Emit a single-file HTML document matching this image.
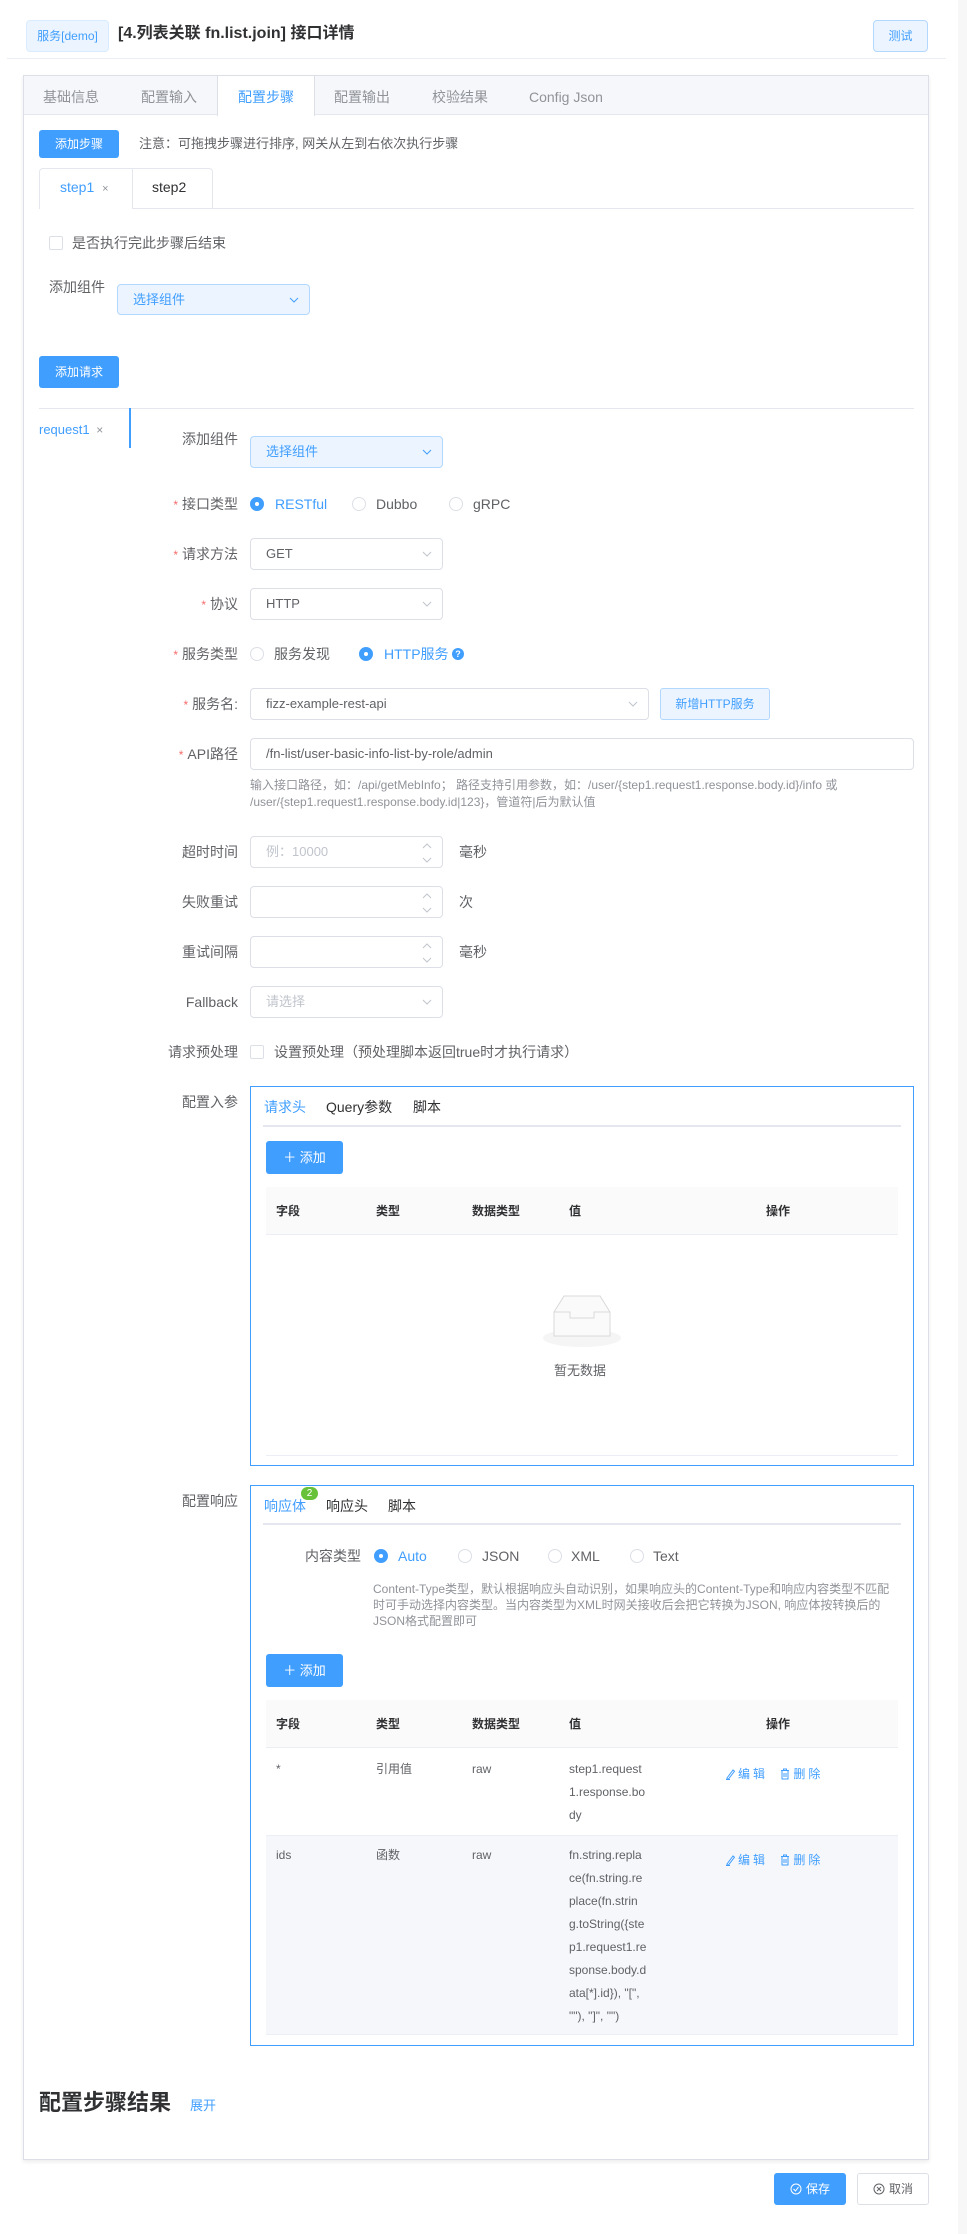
<!DOCTYPE html>
<html><head><meta charset="utf-8">
<style>
*{box-sizing:border-box;margin:0;padding:0}
body{width:967px;height:2234px;background:#fff;font-family:"Liberation Sans","Noto Sans CJK SC",sans-serif;color:#606266;position:relative;overflow:hidden}
.a{position:absolute}
.lbl{position:absolute;right:729px;height:20px;line-height:20px;font-size:14px;color:#606266;white-space:nowrap}
.lbl i{color:#f56c6c;font-style:normal;margin-right:4px;font-size:12px}
.inp{position:absolute;border:1px solid #dcdfe6;border-radius:4px;background:#fff;font-size:13px;color:#606266;padding-left:15px;white-space:nowrap}
.sel{background:#ecf5ff;border-color:#b3d8ff;color:#409eff}
.ph{color:#c0c4cc}
.arr{position:absolute;right:10px;top:50%;margin-top:-4px}
.btn{position:absolute;background:#409eff;color:#fff;border-radius:3px;font-size:12px;text-align:center}
.radio{position:absolute;width:14px;height:14px;border-radius:50%;border:1px solid #dcdfe6;background:#fff}
.radio.on{background:#409eff;border-color:#409eff}
.radio.on:after{content:"";position:absolute;left:4px;top:4px;width:4px;height:4px;border-radius:50%;background:#fff}
.t{position:absolute;white-space:nowrap;line-height:20px;height:20px}
.cb{position:absolute;width:14px;height:14px;border:1px solid #dcdfe6;border-radius:2px;background:#fff}
.th{position:absolute;font-size:12px;font-weight:bold;color:#303133;line-height:20px}
.td{position:absolute;font-size:12px;color:#606266;line-height:23px;white-space:nowrap}
.lk{position:absolute;font-size:12px;color:#409eff;line-height:20px;white-space:nowrap;letter-spacing:3px}
.lk svg{vertical-align:-2px;margin-right:3px}
</style></head><body>

<div class="a" style="left:26px;top:20px;width:83px;height:32px;background:#ecf5ff;border:1px solid #d9ecff;border-radius:4px;color:#409eff;font-size:12px;line-height:30px;text-align:center">服务[demo]</div>
<div class="t" style="left:118px;top:24px;font-size:16px;font-weight:bold;color:#303133">[4.列表关联 fn.list.join] 接口详情</div>
<div class="a" style="left:873px;top:20px;width:55px;height:32px;background:#ecf5ff;border:1px solid #b3d8ff;border-radius:4px;color:#409eff;font-size:12px;line-height:30px;text-align:center">测试</div>
<div class="a" style="left:7px;top:58px;width:939px;height:1px;background:#ebeef5"></div>
<div class="a" style="left:958px;top:0;width:9px;height:2234px;background:#f7f7f7"></div>

<div class="a" style="left:23px;top:75px;width:906px;height:2085px;border:1px solid #dcdfe6;box-shadow:0 2px 4px rgba(0,0,0,.08);background:#fff"></div>
<div class="a" style="left:24px;top:76px;width:904px;height:39px;background:#f5f7fa;border-bottom:1px solid #e4e7ed"></div>
<div class="a" style="left:217px;top:76px;width:98px;height:40px;background:#fff;border-left:1px solid #dcdfe6;border-right:1px solid #dcdfe6"></div>
<div class="t" style="left:43px;top:87px;font-size:14px;color:#909399">基础信息</div>
<div class="t" style="left:141px;top:87px;font-size:14px;color:#909399">配置输入</div>
<div class="t" style="left:238px;top:87px;font-size:14px;color:#409eff">配置步骤</div>
<div class="t" style="left:334px;top:87px;font-size:14px;color:#909399">配置输出</div>
<div class="t" style="left:432px;top:87px;font-size:14px;color:#909399">校验结果</div>
<div class="t" style="left:529px;top:87px;font-size:14px;color:#909399">Config Json</div>

<div class="btn" style="left:39px;top:130px;width:80px;height:28px;line-height:28px">添加步骤</div>
<div class="t" style="left:139px;top:134px;font-size:13px;color:#606266">注意：可拖拽步骤进行排序, 网关从左到右依次执行步骤</div>

<div class="a" style="left:39px;top:168px;width:174px;height:41px;border:1px solid #e4e7ed;border-bottom:none;border-radius:4px 4px 0 0"></div>
<div class="a" style="left:132px;top:168px;width:1px;height:40px;background:#e4e7ed"></div>
<div class="a" style="left:132px;top:208px;width:782px;height:1px;background:#e4e7ed"></div>
<div class="t" style="left:60px;top:177px;font-size:14px;color:#409eff">step1 <span style="font-size:11px;color:#909399;margin-left:4px">×</span></div>
<div class="t" style="left:152px;top:177px;font-size:14px;color:#303133">step2</div>

<div class="cb" style="left:49px;top:236px"></div>
<div class="t" style="left:72px;top:233px;font-size:14px">是否执行完此步骤后结束</div>

<div class="t" style="left:49px;top:277px;font-size:14px">添加组件</div>
<div class="inp sel" style="left:117px;top:284px;width:193px;height:31px;line-height:29px">选择组件<svg class="arr" width="10" height="8"><path d="M1 2l4 4 4-4" fill="none" stroke="#409eff"/></svg></div>

<div class="btn" style="left:39px;top:356px;width:80px;height:32px;line-height:32px">添加请求</div>
<div class="a" style="left:39px;top:408px;width:875px;height:1px;background:#e4e7ed"></div>
<div class="t" style="left:39px;top:420px;font-size:13px;color:#409eff">request1 <span style="color:#909399;font-size:12px;margin-left:3px">×</span></div>
<div class="a" style="left:129px;top:408px;width:2px;height:40px;background:#409eff"></div>

<div class="lbl" style="top:429px">添加组件</div>
<div class="inp sel" style="left:250px;top:436px;width:193px;height:32px;line-height:30px">选择组件<svg class="arr" width="10" height="8"><path d="M1 2l4 4 4-4" fill="none" stroke="#409eff"/></svg></div>

<div class="lbl" style="top:494px"><i>*</i>接口类型</div>
<div class="radio on" style="left:250px;top:497px"></div><div class="t" style="left:275px;top:494px;font-size:14px;color:#409eff">RESTful</div>
<div class="radio" style="left:352px;top:497px"></div><div class="t" style="left:376px;top:494px;font-size:14px;color:#606266">Dubbo</div>
<div class="radio" style="left:449px;top:497px"></div><div class="t" style="left:473px;top:494px;font-size:14px;color:#606266">gRPC</div>

<div class="lbl" style="top:544px"><i>*</i>请求方法</div>
<div class="inp" style="left:250px;top:538px;width:193px;height:32px;line-height:30px">GET<svg class="arr" width="10" height="8"><path d="M1 2l4 4 4-4" fill="none" stroke="#c0c4cc"/></svg></div>
<div class="lbl" style="top:594px"><i>*</i>协议</div>
<div class="inp" style="left:250px;top:588px;width:193px;height:32px;line-height:30px">HTTP<svg class="arr" width="10" height="8"><path d="M1 2l4 4 4-4" fill="none" stroke="#c0c4cc"/></svg></div>

<div class="lbl" style="top:644px"><i>*</i>服务类型</div>
<div class="radio" style="left:250px;top:647px"></div><div class="t" style="left:274px;top:644px;font-size:14px">服务发现</div>
<div class="radio on" style="left:359px;top:647px"></div><div class="t" style="left:384px;top:644px;font-size:14px;color:#409eff">HTTP服务</div>
<div class="a" style="left:452px;top:648px;width:12px;height:12px;border-radius:50%;background:#409eff;color:#fff;font-size:9px;line-height:12px;text-align:center;font-weight:bold">?</div>

<div class="lbl" style="top:694px"><i>*</i>服务名:</div>
<div class="inp" style="left:250px;top:688px;width:399px;height:32px;line-height:30px">fizz-example-rest-api<svg class="arr" width="10" height="8"><path d="M1 2l4 4 4-4" fill="none" stroke="#c0c4cc"/></svg></div>
<div class="a" style="left:660px;top:688px;width:110px;height:32px;background:#ecf5ff;border:1px solid #b3d8ff;border-radius:3px;color:#409eff;font-size:12px;line-height:30px;text-align:center">新增HTTP服务</div>

<div class="lbl" style="top:744px"><i>*</i>API路径</div>
<div class="inp" style="left:250px;top:738px;width:664px;height:32px;line-height:30px">/fn-list/user-basic-info-list-by-role/admin</div>
<div class="a" style="left:250px;top:777px;font-size:12px;color:#909399;line-height:17px;width:660px">输入接口路径，如：/api/getMebInfo；  路径支持引用参数，如：/user/{step1.request1.response.body.id}/info 或<br>/user/{step1.request1.response.body.id|123}，管道符|后为默认值</div>

<div class="lbl" style="top:842px">超时时间</div>
<div class="inp ph" style="left:250px;top:836px;width:193px;height:32px;line-height:30px">例：10000<svg class="a" style="right:10px;top:6px" width="10" height="20"><path d="M1 5l4-4 4 4M1 15l4 4 4-4" fill="none" stroke="#c0c4cc"/></svg></div>
<div class="t" style="left:459px;top:842px;font-size:14px">毫秒</div>
<div class="lbl" style="top:892px">失败重试</div>
<div class="inp" style="left:250px;top:886px;width:193px;height:32px"><svg class="a" style="right:10px;top:6px" width="10" height="20"><path d="M1 5l4-4 4 4M1 15l4 4 4-4" fill="none" stroke="#c0c4cc"/></svg></div>
<div class="t" style="left:459px;top:892px;font-size:14px">次</div>
<div class="lbl" style="top:942px">重试间隔</div>
<div class="inp" style="left:250px;top:936px;width:193px;height:32px"><svg class="a" style="right:10px;top:6px" width="10" height="20"><path d="M1 5l4-4 4 4M1 15l4 4 4-4" fill="none" stroke="#c0c4cc"/></svg></div>
<div class="t" style="left:459px;top:942px;font-size:14px">毫秒</div>
<div class="lbl" style="top:992px">Fallback</div>
<div class="inp ph" style="left:250px;top:986px;width:193px;height:32px;line-height:30px">请选择<svg class="arr" width="10" height="8"><path d="M1 2l4 4 4-4" fill="none" stroke="#c0c4cc"/></svg></div>

<div class="lbl" style="top:1042px">请求预处理</div>
<div class="cb" style="left:250px;top:1045px"></div>
<div class="t" style="left:274px;top:1042px;font-size:14px">设置预处理（预处理脚本返回true时才执行请求）</div>

<div class="lbl" style="top:1092px">配置入参</div>
<div class="a" style="left:250px;top:1086px;width:664px;height:380px;border:1px solid #409eff"></div>
<div class="t" style="left:264px;top:1097px;font-size:14px;color:#409eff">请求头</div>
<div class="t" style="left:326px;top:1097px;font-size:14px;color:#303133">Query参数</div>
<div class="t" style="left:413px;top:1097px;font-size:14px;color:#303133">脚本</div>
<div class="a" style="left:263px;top:1125px;width:638px;height:2px;background:#e4e7ed"></div>
<div class="btn" style="left:266px;top:1141px;width:77px;height:33px;line-height:33px;font-size:13px">＋ 添加</div>
<div class="a" style="left:266px;top:1187px;width:632px;height:48px;background:#fafafa;border-bottom:1px solid #ebeef5"></div>
<div class="th" style="left:276px;top:1201px">字段</div><div class="th" style="left:376px;top:1201px">类型</div><div class="th" style="left:472px;top:1201px">数据类型</div><div class="th" style="left:569px;top:1201px">值</div><div class="th" style="left:766px;top:1201px">操作</div>
<svg class="a" style="left:542px;top:1294px" width="80" height="54"><ellipse cx="40" cy="44" rx="39" ry="9" fill="#f5f5f5"/><path d="M12 18L22 2h36l10 16v24H12z" fill="#fafafa" stroke="#d9d9d9"/><path d="M12 18h16v6h24v-6h16" fill="none" stroke="#d9d9d9"/></svg>
<div class="t" style="left:554px;top:1361px;font-size:13px;color:#606266">暂无数据</div>
<div class="a" style="left:266px;top:1455px;width:632px;height:1px;background:#ebeef5"></div>

<div class="lbl" style="top:1491px">配置响应</div>
<div class="a" style="left:250px;top:1485px;width:664px;height:561px;border:1px solid #409eff"></div>
<div class="t" style="left:264px;top:1496px;font-size:14px;color:#409eff">响应体</div>
<div class="a" style="left:301px;top:1487px;width:17px;height:13px;border-radius:7px;background:#67c23a;color:#fff;font-size:10px;line-height:13px;text-align:center">2</div>
<div class="t" style="left:326px;top:1496px;font-size:14px;color:#303133">响应头</div>
<div class="t" style="left:388px;top:1496px;font-size:14px;color:#303133">脚本</div>
<div class="a" style="left:263px;top:1523px;width:638px;height:2px;background:#e4e7ed"></div>
<div class="t" style="left:305px;top:1546px;font-size:14px">内容类型</div>
<div class="radio on" style="left:374px;top:1549px"></div><div class="t" style="left:398px;top:1546px;font-size:14px;color:#409eff">Auto</div>
<div class="radio" style="left:458px;top:1549px"></div><div class="t" style="left:482px;top:1546px;font-size:14px">JSON</div>
<div class="radio" style="left:548px;top:1549px"></div><div class="t" style="left:571px;top:1546px;font-size:14px">XML</div>
<div class="radio" style="left:630px;top:1549px"></div><div class="t" style="left:653px;top:1546px;font-size:14px">Text</div>
<div class="a" style="left:373px;top:1581px;font-size:12px;color:#909399;line-height:16px;white-space:nowrap">Content-Type类型，默认根据响应头自动识别，如果响应头的Content-Type和响应内容类型不匹配<br>时可手动选择内容类型。当内容类型为XML时网关接收后会把它转换为JSON, 响应体按转换后的<br>JSON格式配置即可</div>
<div class="btn" style="left:266px;top:1654px;width:77px;height:33px;line-height:33px;font-size:13px">＋ 添加</div>
<div class="a" style="left:266px;top:1700px;width:632px;height:48px;background:#fafafa;border-bottom:1px solid #ebeef5"></div>
<div class="th" style="left:276px;top:1714px">字段</div><div class="th" style="left:376px;top:1714px">类型</div><div class="th" style="left:472px;top:1714px">数据类型</div><div class="th" style="left:569px;top:1714px">值</div><div class="th" style="left:766px;top:1714px">操作</div>
<div class="a" style="left:266px;top:1835px;width:632px;height:200px;background:#f5f7fa;border-top:1px solid #ebeef5;border-bottom:1px solid #ebeef5"></div>
<div class="td" style="left:276px;top:1758px">*</div><div class="td" style="left:376px;top:1758px">引用值</div><div class="td" style="left:472px;top:1758px">raw</div>
<div class="td" style="left:569px;top:1758px">step1.request<br>1.response.bo<br>dy</div>
<div class="lk" style="left:725px;top:1764px"><svg width="10" height="12"><path d="M2 10L8 2l1.5 1.2L3.5 11H2zM1 11.5h4" fill="none" stroke="#409eff"/></svg>编辑 <svg width="10" height="12" style="margin-left:6px"><path d="M1 2.5h8M3.5 2.5V1h3v1.5M2 2.5v8.5h6V2.5M4 5v4M6 5v4" fill="none" stroke="#409eff"/></svg>删除</div>
<div class="td" style="left:276px;top:1844px">ids</div><div class="td" style="left:376px;top:1844px">函数</div><div class="td" style="left:472px;top:1844px">raw</div>
<div class="td" style="left:569px;top:1844px">fn.string.repla<br>ce(fn.string.re<br>place(fn.strin<br>g.toString({ste<br>p1.request1.re<br>sponse.body.d<br>ata[*].id}), "[",<br>""), "]", "")</div>
<div class="lk" style="left:725px;top:1850px"><svg width="10" height="12"><path d="M2 10L8 2l1.5 1.2L3.5 11H2zM1 11.5h4" fill="none" stroke="#409eff"/></svg>编辑 <svg width="10" height="12" style="margin-left:6px"><path d="M1 2.5h8M3.5 2.5V1h3v1.5M2 2.5v8.5h6V2.5M4 5v4M6 5v4" fill="none" stroke="#409eff"/></svg>删除</div>

<div class="t" style="left:39px;top:2088px;height:30px;line-height:30px;font-size:22px;font-weight:bold;color:#303133">配置步骤结果</div>
<div class="t" style="left:190px;top:2096px;font-size:13px;color:#409eff">展开</div>

<div class="btn" style="left:774px;top:2173px;width:72px;height:32px;line-height:32px;font-size:12px"><svg width="12" height="12" style="vertical-align:-2px;margin-right:4px"><circle cx="6" cy="6" r="5" fill="none" stroke="#fff"/><path d="M3.5 6l2 2 3-4" fill="none" stroke="#fff"/></svg>保存</div>
<div class="a" style="left:857px;top:2173px;width:72px;height:32px;border:1px solid #dcdfe6;border-radius:3px;font-size:12px;line-height:30px;text-align:center;color:#606266"><svg width="12" height="12" style="vertical-align:-2px;margin-right:4px"><circle cx="6" cy="6" r="5" fill="none" stroke="#606266"/><path d="M4 4l4 4M8 4l-4 4" stroke="#606266"/></svg>取消</div>
</body></html>
